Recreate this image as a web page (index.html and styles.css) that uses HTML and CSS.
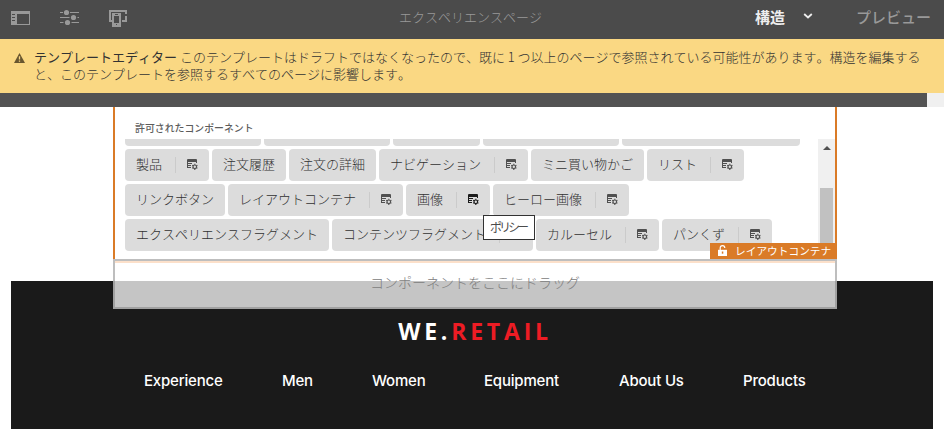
FILE: index.html
```html
<!DOCTYPE html>
<html lang="ja">
<head>
<meta charset="utf-8">
<title>エクスペリエンスページ</title>
<link rel="stylesheet" href="styles.css">
</head>
<body>
<svg class="defs" width="0" height="0">
  <symbol id="policy" viewBox="0 0 11 11">
    <path fill="currentColor" d="M0 1q0-1 1-1h8q1 0 1 1v3H9V3H1v1h4v1H1v1h3v1H1v1h3v1H0z"/>
    <circle cx="7.8" cy="7.8" r="1.8" fill="none" stroke="currentColor" stroke-width="1.2"/>
    <path stroke="currentColor" stroke-width="1.1" d="M7.8 4.8v1M7.8 9.8v1.1M5.2 6.3l.9.5M9.5 8.8l.9.5M5.2 9.3l.9-.5M9.5 6.8l.9-.5"/>
  </symbol>
</svg>
<header class="toolbar">
  <div class="tools">
    <svg class="tool" width="20" height="20" viewBox="0 0 20 20"><path fill="#999" fill-rule="evenodd" d="M0 3h19v14H0zM6 6v10h12V6zM1 6h3v1H1zm0 3h3v1H1zm0 3h3v1H1z"/></svg>
    <svg class="tool" width="20" height="20" viewBox="0 0 20 20"><path stroke="#999" d="M0 4.500h19M0 9.500h19M0 14.500h19"/><path stroke="#4b4b4b" stroke-width="2" d="M3 4.500h7M9.500 9.500h8M3.500 14.500h8"/><g fill="#999"><circle cx="6.500" cy="4.500" r="2.600"/><circle cx="13.500" cy="9.500" r="2.600"/><circle cx="7.500" cy="14.500" r="2.600"/></g></svg>
    <svg class="tool" width="20" height="20" viewBox="0 0 20 20"><path fill="#999" d="M0 2h18v4h-2V4H2v8h1v2H0zM16 8h2v6h-5v-2h3z"/><path fill="#999" fill-rule="evenodd" d="M3 5h9v14H3zM5 8v7h5V8zM6 6v1h3V6zM7 16v1h1v-1z"/></svg>
  </div>
  <div class="page-title">エクスペリエンスページ</div>
  <div class="modes">
    <span class="mode-current">構造</span>
    <svg class="chevron" width="10" height="6" viewBox="0 0 10 6"><path d="M1.200 1l3.800 3.500L8.800 1" fill="none" stroke="#eee" stroke-width="1.800"/></svg>
    <span class="mode-preview">プレビュー</span>
  </div>
</header>
<section class="alert">
  <svg class="warning" width="11" height="10" viewBox="0 0 11 10"><path fill="#68562f" d="M5.500 0L11 10H0z"/><path stroke="#fad883" stroke-width="1.300" d="M5.500 3.300v3.200M5.500 7.400v1.300"/></svg>
  <p class="alert-text"><b>テンプレートエディター</b> このテンプレートはドラフトではなくなったので、既に 1 つ以上のページで参照されている可能性があります。構造を編集すると、このテンプレートを参照するすべてのページに影響します。</p>
</section>
<div class="strip"></div>
<main class="canvas">
  <section class="container">
    <h2 class="allowed-title">許可されたコンポーネント</h2>
    <div class="scroll-area">
      <div class="chips">
        <div class="row cut">
          <span class="stub w136"></span><span class="stub w126"></span><span class="stub w87"></span><span class="stub w136"></span><span class="stub w178"></span>
        </div>
        <div class="row">
          <span class="chip">製品<i class="policy"><svg class="icon"><use href="#policy"/></svg></i></span>
          <span class="chip">注文履歴</span>
          <span class="chip">注文の詳細</span>
          <span class="chip">ナビゲーション<i class="policy"><svg class="icon"><use href="#policy"/></svg></i></span>
          <span class="chip">ミニ買い物かご</span>
          <span class="chip">リスト<i class="policy"><svg class="icon"><use href="#policy"/></svg></i></span>
        </div>
        <div class="row">
          <span class="chip">リンクボタン</span>
          <span class="chip">レイアウトコンテナ<i class="policy"><svg class="icon"><use href="#policy"/></svg></i></span>
          <span class="chip">画像<i class="policy hovered"><svg class="icon"><use href="#policy"/></svg></i><span class="tooltip">ポリシー</span></span>
          <span class="chip">ヒーロー画像<i class="policy"><svg class="icon"><use href="#policy"/></svg></i></span>
        </div>
        <div class="row">
          <span class="chip">エクスペリエンスフラグメント</span>
          <span class="chip">コンテンツフラグメント<i class="policy"></i></span>
          <span class="chip">カルーセル<i class="policy"><svg class="icon"><use href="#policy"/></svg></i></span>
          <span class="chip">パンくず<i class="policy"><svg class="icon"><use href="#policy"/></svg></i></span>
        </div>
      </div>
      <div class="scrollbar">
        <svg class="arrow" width="8" height="4" viewBox="0 0 8 4"><path d="M0 4l4-4 4 4z" fill="#505050"/></svg>
        <div class="thumb"></div>
      </div>
    </div>
    <div class="badge">
      <svg class="lock" width="10" height="11" viewBox="0 0 10 11"><path d="M2.200 5V3q0-2.300 2.300-2.300T6.800 3" fill="none" stroke="#fff" stroke-width="1.200"/><path fill="#fff" d="M0 4.800h9V11H0z"/><path fill="#da7b27" d="M3.800 6.500h1.500v2.200H3.800z"/></svg>
      レイアウトコンテナ
    </div>
  </section>
  <div class="dropzone">コンポーネントをここにドラッグ</div>
  <footer class="site">
    <div class="logo">WE.<span class="logo-red">RETAIL</span></div>
    <nav class="nav">
      <a class="n1">Experience</a><a class="n2">Men</a><a class="n3">Women</a><a class="n4">Equipment</a><a class="n5">About Us</a><a class="n6">Products</a>
    </nav>
  </footer>
</main>
</body>
</html>
```

FILE: styles.css
```css
* { box-sizing: border-box; }
body {
  margin: 0;
  width: 944px;
  height: 429px;
  overflow: hidden;
  background: #fff;
  color: #323232;
  font: 300 13px/17px "Noto Sans CJK JP", sans-serif;
  font-kerning: none;
}
svg { display: block; flex: none; }
.defs { position: absolute; }

.toolbar {
  display: grid;
  grid-template-columns: 1fr 142px 1fr;
  align-items: center;
  height: 39px;
  padding: 0 13px 5px 11px;
  background: #4b4b4b;
  color: #999;
}
.tools { display: flex; gap: 29px; padding-top: 1px; }
.page-title { margin: -2px 0 0 -1px; white-space: nowrap; }
.modes { display: flex; align-items: center; justify-content: flex-end; margin-top: -2px; white-space: nowrap; }
.mode-current { color: #eee; font-size: 15px; font-weight: 700; }
.chevron { margin-left: 18px; }
.mode-preview { margin-left: 43px; font-size: 15px; font-weight: 500; }

.alert {
  display: flex;
  height: 54px;
  padding: 9px 20px 0 14px;
  background: #fad883;
}
.warning { margin: 5px 9px 0 0; }
.alert-text { margin: 0; line-height: 17px; }

.strip { width: 944px; height: 14px; background: #535353; border-right: 17px solid #f0f0f0; }

.canvas { display: flex; flex-direction: column; }
.container {
  position: relative;
  z-index: 2;
  width: 724px;
  height: 152px;
  margin-left: 113px;
  border: solid #da7b27;
  border-width: 0 2px;
}
.allowed-title {
  height: 32px;
  margin: 0;
  padding: 12px 0 0 20px;
  color: #5c5c5c;
  font-size: 9.900px;
  font-weight: 500;
  line-height: 18px;
}
.scroll-area {
  display: flex;
  justify-content: space-between;
  height: 112px;
  padding-left: 10px;
}
.chips { display: flex; flex-direction: column; gap: 3px; }
.row { display: flex; gap: 3px; }
.chip, .stub { background: #dcdcdc; border-radius: 4px; }
.stub { height: 7px; border-radius: 0 0 4px 4px; }
.w87 { width: 87px; }
.w126 { width: 126px; }
.w136 { width: 136px; }
.w178 { width: 178px; }
.chip {
  position: relative;
  display: flex;
  align-items: center;
  height: 32px;
  padding: 0 11px 4px;
  white-space: nowrap;
}
.policy {
  display: flex;
  align-items: center;
  width: 34px;
  height: 16px;
  margin: 3px -11px 0 13px;
  padding-left: 11px;
  border-left: 1px solid #cbcbcb;
  color: #505050;
}
.icon { width: 11px; height: 11px; }
.hovered { color: #1c1c1c; }
.tooltip {
  position: absolute;
  z-index: 3;
  top: 31px;
  left: 77px;
  width: 52px;
  height: 25px;
  padding-left: 6px;
  border: 1px solid #323232;
  background: #fff;
  color: #4b4b4b;
  font-size: 12px;
  font-weight: 400;
  line-height: 22px;
  letter-spacing: -3px;
}
.scrollbar { width: 17px; height: 112px; padding: 7px 2px 0; background: #f0f0f0; }
.arrow { margin-left: 3px; }
.thumb { width: 13px; height: 63px; margin-top: 38px; background: #c1c1c1; }
.badge {
  position: absolute;
  right: -2px;
  bottom: 0;
  display: flex;
  align-items: center;
  gap: 7px;
  width: 127px;
  height: 16px;
  padding: 0 0 1px 8px;
  background: #da7b27;
  color: #fff;
  font-size: 10.700px;
  font-weight: 400;
  white-space: nowrap;
}

.dropzone {
  position: relative;
  z-index: 1;
  width: 724px;
  height: 50px;
  margin: 0 0 -28px 113px;
  border: 2px solid rgba(125, 125, 125, .5);
  background: rgba(255, 255, 255, .75);
  box-shadow: inset 0 2px #fce0ca;
  color: #808080;
  font-size: 14px;
  line-height: 42px;
  text-align: center;
}
.site {
  display: flex;
  flex-direction: column;
  align-items: center;
  width: 922px;
  height: 148px;
  margin-left: 11px;
  padding-top: 36px;
  background: #1a1a1a;
  color: #fff;
}
.logo { margin-left: 6px; font: 700 23px/28px "Open Sans", sans-serif; letter-spacing: 3.800px; }
.logo-red { color: #ed1c24; }
.nav { display: flex; gap: 59px; margin: 26px 0 0 5px; font: 500 15px/20px Inter, sans-serif; white-space: nowrap; }
.nav a { letter-spacing: -.2px; }
.n1 { width: 79px; }
.n2 { width: 31px; }
.n3 { width: 53px; }
.n4 { width: 76px; }
.n5 { width: 65px; }
.n6 { width: 62px; }
```
